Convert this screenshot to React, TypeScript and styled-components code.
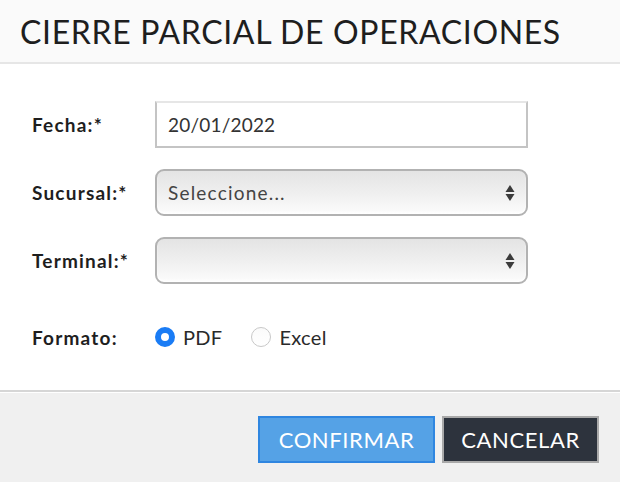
import React, { FunctionComponent, useState } from 'react';
import styled, { createGlobalStyle } from 'styled-components';

const GlobalStyle = createGlobalStyle`
  html, body {
    margin: 0;
    padding: 0;
    background: #ffffff;
    font-family: Lato, "Open Sans", sans-serif;
  }
`;

const Dialog = styled.div`
  width: 620px;
  height: 482px;
  display: flex;
  flex-direction: column;
  background: #ffffff;
`;

const Header = styled.div`
  display: flex;
  align-items: center;
  padding: 0 20px;
  background: #fafafa;
  border-bottom: 2px solid #e6e6e6;
  box-sizing: border-box;
  height: 64px;
`;

const Title = styled.h1`
  margin: 0;
  font-size: 32px;
  font-weight: 400;
  color: #1e1e1e;
  letter-spacing: 0.65px;
`;

const Body = styled.div`
  flex: 1;
  display: flex;
  flex-direction: column;
  gap: 21px;
  padding: 37px 92px 0 32px;
`;

const Row = styled.div<{ $top?: number }>`
  display: flex;
  align-items: center;
  margin-top: ${(p) => p.$top ?? 0}px;
`;

const Label = styled.label`
  width: 123px;
  font-size: 19px;
  font-weight: 700;
  letter-spacing: 1.2px;
  color: #1e1e1e;
`;

const TextInput = styled.input`
  width: 373px;
  height: 47px;
  box-sizing: border-box;
  border: 2px solid #c4c4c4;
  border-top-color: #e6e6e6;
  background: #ffffff;
  padding: 0 11px;
  font-family: inherit;
  font-size: 19px;
  letter-spacing: 0.2px;
  color: #333333;
  outline: none;
`;

const SelectBox = styled.div`
  position: relative;
  width: 373px;
  height: 47px;
  box-sizing: border-box;
  border: 2px solid #b2b2b2;
  border-radius: 9px;
  background: linear-gradient(#e4e4e4, #f0f0f0 55%, #fcfcfc);
  box-shadow: inset 0 -2px 2px rgba(255, 255, 255, 0.8);
  display: flex;
  align-items: center;
  padding: 0 11px;
  font-size: 19px;
  letter-spacing: 1.2px;
  color: #444444;
`;

const Arrows = styled.svg`
  position: absolute;
  right: 11px;
  top: 50%;
  transform: translateY(-50%);
`;

const RadioGroup = styled.div`
  display: flex;
  align-items: center;
  gap: 29px;
`;

const RadioOption = styled.label`
  display: flex;
  align-items: center;
  gap: 8px;
  font-size: 20px;
  letter-spacing: 0.3px;
  color: #2a2a2a;
  cursor: pointer;
`;

const RadioDot = styled.span<{ $checked: boolean }>`
  width: 20px;
  height: 20px;
  box-sizing: border-box;
  border-radius: 50%;
  ${(p) =>
    p.$checked
      ? `border: 6px solid #1a7cf5; background: #ffffff;`
      : `border: 1px solid #c8c8c8; background: linear-gradient(#fafafa, #ffffff);`}
`;

const Footer = styled.div`
  height: 92px;
  box-sizing: border-box;
  border-top: 2px solid #d6d6d6;
  box-shadow: inset 0 1px 0 #ffffff;
  background: #f0f0f0;
  display: flex;
  justify-content: flex-end;
  align-items: flex-start;
  gap: 7px;
  padding: 24px 21px 0 0;
`;

const Button = styled.button<{ $variant: 'primary' | 'dark' }>`
  height: 47px;
  box-sizing: border-box;
  padding: 0;
  font-family: inherit;
  font-size: 22px;
  letter-spacing: 0.6px;
  color: #ffffff;
  cursor: pointer;
  ${(p) =>
    p.$variant === 'primary'
      ? `width: 177px; background: #55a2e6; border: 2px solid #2f86e0;`
      : `width: 157px; background: #2d333d; border: 2px solid #a9a9a9;`}
`;

const SelectArrows = () => (
  <Arrows width="10" height="18" viewBox="0 0 10 18">
    <path d="M5 1 L9.5 8 H0.5 Z" fill="#3b3b3b" />
    <path d="M5 17 L9.5 10 H0.5 Z" fill="#3b3b3b" />
  </Arrows>
);

const App: FunctionComponent = () => {
  const [format, setFormat] = useState<'pdf' | 'excel'>('pdf');

  return (
    <Dialog>
      <GlobalStyle />
      <Header>
        <Title>CIERRE PARCIAL DE OPERACIONES</Title>
      </Header>
      <Body>
        <Row>
          <Label>Fecha:*</Label>
          <TextInput defaultValue="20/01/2022" />
        </Row>
        <Row>
          <Label>Sucursal:*</Label>
          <SelectBox>
            Seleccione...
            <SelectArrows />
          </SelectBox>
        </Row>
        <Row>
          <Label>Terminal:*</Label>
          <SelectBox>
            <SelectArrows />
          </SelectBox>
        </Row>
        <Row $top={20}>
          <Label>Formato:</Label>
          <RadioGroup>
            <RadioOption onClick={() => setFormat('pdf')}>
              <RadioDot $checked={format === 'pdf'} />
              PDF
            </RadioOption>
            <RadioOption onClick={() => setFormat('excel')}>
              <RadioDot $checked={format === 'excel'} />
              Excel
            </RadioOption>
          </RadioGroup>
        </Row>
      </Body>
      <Footer>
        <Button $variant="primary">CONFIRMAR</Button>
        <Button $variant="dark">CANCELAR</Button>
      </Footer>
    </Dialog>
  );
};

export default App;
